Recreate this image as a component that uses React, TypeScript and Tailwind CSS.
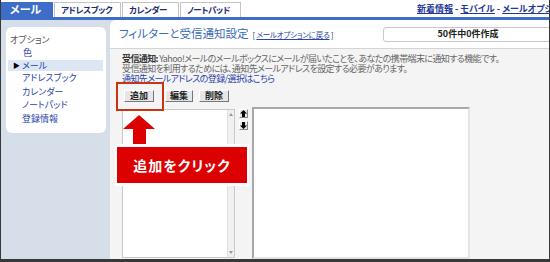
import { } from 'react'

const tabs = ['アドレスブック', 'カレンダー', 'ノートパッド']
const tabWidths = ['w-[67px]', 'w-[57px]', 'w-[61px]']

const sideItems = ['アドレスブック', 'カレンダー', 'ノートパッド', '登録情報']

function ArrowButton({ up }: { up?: boolean }) {
    return (
        <div className="w-[9px] h-[9px] bg-[#e4e4e4] border-t border-l border-t-white border-l-white border-b border-r border-b-[#888] border-r-[#888] flex items-center justify-center">
            <svg width="7" height="7" viewBox="0 0 7 7">
                {up ? (
                    <polygon points="3.5,0 7,3.5 5,3.5 5,7 2,7 2,3.5 0,3.5" fill="#000" />
                ) : (
                    <polygon points="3.5,7 7,3.5 5,3.5 5,0 2,0 2,3.5 0,3.5" fill="#000" />
                )}
            </svg>
        </div>
    )
}

function Btn({ label, w }: { label: string; w: string }) {
    return (
        <button className={`${w} h-[12px] bg-[#e6e6e6] border border-t-white border-l-white border-b-[#777] border-r-[#777] text-[9px] leading-[10px] font-bold text-[#222] flex items-center justify-center`}>
            {label}
        </button>
    )
}

export default function App() {
    return (
        <div className="relative w-[550px] h-[262px] overflow-hidden flex flex-col bg-white border-l border-r border-b-[3px] border-[#383838] font-['Noto_Sans_CJK_JP',sans-serif] [font-feature-settings:'palt']">
            {/* tab bar */}
            <div className="h-[17px] flex items-end shrink-0">
                <div className="w-[416px] flex items-end shrink-0">
                    <div className="w-[52px] h-[15px] bg-[#3d6dc6] text-white text-[11px] leading-[15px] font-bold pl-[9px]">メール</div>
                    {tabs.map((t, i) => (
                        <div key={t} className={`${tabWidths[i]} h-[15px] ml-px border-t border-x border-[#c4c4c4] bg-white text-[8.5px] tracking-[-0.4px] leading-[13px] font-bold text-[#1c2c6c] pl-[6px]`}>
                            {t}
                        </div>
                    ))}
                </div>
                <div className="flex-1 self-center whitespace-nowrap overflow-hidden text-[9px] font-bold text-[#1f3a94]">
                    <span className="underline">新着情報</span> - <span className="underline">モバイル</span> - <span className="underline">メールオプション</span>
                </div>
            </div>
            <div className="h-[3px] bg-[#3d6dc6] shrink-0" />

            <div className="flex-1 flex min-h-0 bg-[#d6deea]">
                {/* sidebar */}
                <div className="w-[109px] shrink-0 pt-[7px] pl-[5px] pr-[4px]">
                    <div className="h-[106px] bg-white rounded-[6px] pt-[6px] pl-[2px] pr-[3px] text-[9px]">
                        <div className="text-[#555] pl-[2px] leading-[13px]">オプション</div>
                        <div className="text-[#2a45a8] pl-[15px] leading-[13px]">色</div>
                        <div className="flex items-center h-[11px] bg-[#dde6f5] text-[#2a45a8] mt-[1px]">
                            <span className="text-[7px] text-black w-[14px] pl-[5px]">▶</span>
                            メール
                        </div>
                        {sideItems.map(s => (
                            <div key={s} className="text-[#2a45a8] pl-[14px] leading-[13.5px]">{s}</div>
                        ))}
                    </div>
                </div>

                {/* main */}
                <div className="flex-1 flex flex-col bg-[#f4f4f4] rounded-tl-[6px] min-w-0">
                    <div className="h-[29px] shrink-0 bg-white rounded-tl-[6px] border-b border-[#d4d4d4] flex items-center">
                        <div className="w-[273px] shrink-0 pl-[9px] flex items-baseline gap-[4px] whitespace-nowrap">
                            <span className="text-[11.5px] text-[#3a6cb4]">フィルターと受信通知設定</span>
                            <span className="text-[7.5px] tracking-[-0.2px] text-[#333]">[ <span className="text-[#2a45a8] underline">メールオプションに戻る</span> ]</span>
                        </div>
                        <div className="w-[170px] shrink-0 h-[15px] border border-[#c8c8c8] rounded-[3px] bg-white text-[9px] font-bold text-[#222] flex items-center justify-center">
                            50件中0件作成
                        </div>
                    </div>

                    <div className="flex-1 flex flex-col pl-[12px] pt-[5px] min-h-0">
                        <div className="text-[9px] tracking-[-0.6px] leading-[10px] text-[#666] whitespace-nowrap">
                            <div><span className="font-bold text-[#333]">受信通知:</span> Yahoo!メールのメールボックスにメールが届いたことを、あなたの携帯端末に通知する機能です。</div>
                            <div>受信通知を利用するためには、通知先メールアドレスを設定する必要があります。</div>
                            <div className="text-[#2a45a8]">通知先メールアドレスの登録/選択はこちら</div>
                        </div>
                        <div className="flex mt-[6px] ml-[2px]">
                            <Btn label="追加" w="w-[30px]" />
                            <div className="w-[11px]" />
                            <Btn label="編集" w="w-[28px]" />
                            <div className="w-[6px]" />
                            <Btn label="削除" w="w-[30px]" />
                        </div>
                        <div className="flex-1 flex mt-[5px] min-h-0">
                            <div className="w-[113px] mt-[2px] mb-[1px] bg-white border border-[#c8c8c8] flex justify-end">
                                <div className="w-[7px] bg-[#f0f0f0] border-l border-[#e0e0e0] flex flex-col justify-between items-center py-[3px]">
                                    <svg width="4" height="3" viewBox="0 0 4 3"><polygon points="2,0 4,3 0,3" fill="#999" /></svg>
                                    <svg width="4" height="3" viewBox="0 0 4 3"><polygon points="0,0 4,0 2,3" fill="#999" /></svg>
                                </div>
                            </div>
                            <div className="w-[17px] flex flex-col items-center pt-[2px] gap-[3px]">
                                <ArrowButton up />
                                <ArrowButton />
                            </div>
                            <div className="w-[218px] bg-white border-2 border-t-[#a8a8a8] border-l-[#a8a8a8] border-b-[#e4e4e4] border-r-[#e4e4e4]" />
                        </div>
                    </div>
                </div>
            </div>

            {/* annotation overlays */}
            <div className="absolute left-[115px] top-[82px] w-[48px] h-[29px] border-2 border-[#cc3311]" />
            <svg className="absolute left-[122px] top-[115px]" width="32" height="32" viewBox="0 0 32 32">
                <polygon points="16,0 32,14 23,14 23,32 10,32 10,14 0,14" fill="#dd0000" />
            </svg>
            <div className="absolute left-[114px] top-[144px] w-[134px] h-[42px] bg-[#dd0000] border-x-2 border-y-[3px] border-white flex items-center justify-center text-white text-[14px] font-bold tracking-[1px]">
                追加をクリック
            </div>
        </div>
    )
}
